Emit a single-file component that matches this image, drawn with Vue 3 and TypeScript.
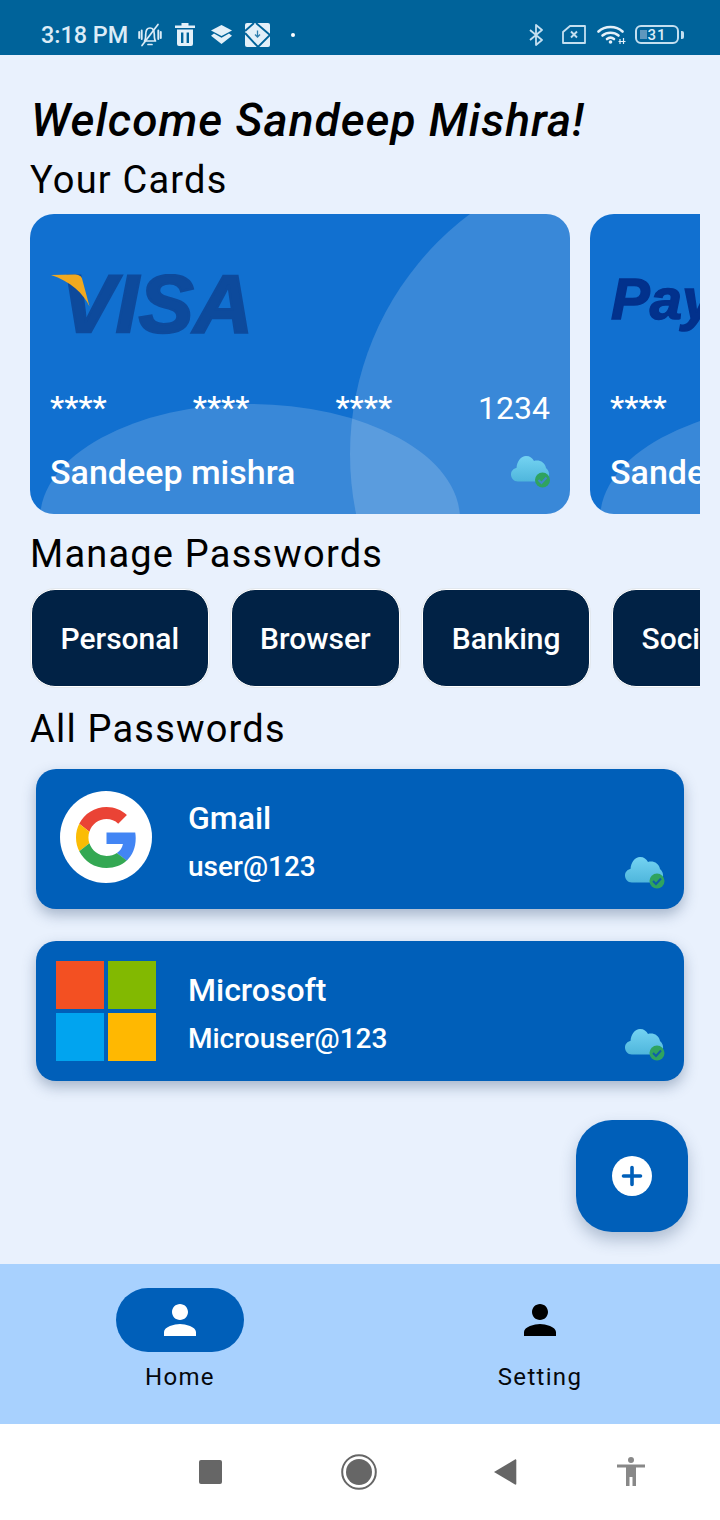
<script setup lang="ts">
interface Card { logo: 'visa' | 'paypal' }
const cards: Card[] = [{ logo: 'visa' }, { logo: 'paypal' }]
const chips: string[] = ['Personal', 'Browser', 'Banking', 'Social']
const personPath = 'M12 12c2.21 0 4-1.79 4-4s-1.79-4-4-4-4 1.790-4 4 1.790 4 4 4zm0 2c-2.670 0-8 1.340-8 4v2h16v-2c0-2.660-5.330-4-8-4z'
</script>

<template>
  <div class="page">
    <header class="status">
      <span class="time">3:18 PM</span>
      <svg class="ic-bell" width="24" height="24" viewBox="0 0 24 24" fill="none" stroke="#dcecf7" stroke-width="1.700" stroke-linecap="round" stroke-linejoin="round">
        <path d="M6.500 18c1.200-1.500 1.200-3.500 1.200-6.500C7.700 7.500 9.500 5 12 5s4.300 2.500 4.300 6.500c0 3 0 5 1.200 6.500z" />
        <path d="M10 21.500h4" />
        <path d="M4 22.500 20 1.500" />
        <path d="M1.200 9v6M3.700 7.500v8.500M20.300 7.500v8.500M22.800 9v6" stroke-width="1.900" />
      </svg>
      <svg class="ic-trash" width="20" height="23" viewBox="0 0 20 23" fill="#e3f0f9">
        <path fill-rule="evenodd" d="M6.500 0h7v2.500H20V5H0V2.500h6.500zM2 6.500h16V21a2 2 0 0 1-2 2H4a2 2 0 0 1-2-2zM6 9.500V20h2.400V9.500zm5.600 0V20H14V9.500z" />
      </svg>
      <svg class="ic-layers" width="21" height="19" viewBox="0 0 21 19" fill="#e3f0f9">
        <path d="M10.500 0 21 5.500 10.500 11 0 5.500z" />
        <path d="M3 8.500 10.500 12.700 18 8.500l3 2.200-10.500 8.300L0 10.700z" />
      </svg>
      <svg class="ic-app" width="25" height="24" viewBox="0 0 25 24">
        <rect width="25" height="24" rx="2" fill="#e3f0f9" />
        <path d="M0 8 9 0M11 0 25 12M0 10 13 24M13 24 25 12" stroke="#00639a" stroke-width="1.900" fill="none" />
        <path d="M12.500 7.500v6M10 11.500l2.500 2.500 2.500-2.500" stroke="#2f7fae" stroke-width="1.300" fill="none" />
      </svg>
      <span class="dot"></span>
      <div class="status-right">
        <svg class="ic-bt" width="15" height="22" viewBox="0 0 15 22" fill="none" stroke="#c4dff0" stroke-width="1.800" stroke-linejoin="round">
          <path d="M1 6 13 16l-6 5V1l6 5L1 16" />
        </svg>
        <svg class="ic-sim" width="24" height="19" viewBox="0 0 24 19" fill="none" stroke="#c4dff0" stroke-width="1.800">
          <path d="M8 1h15v17H1V7z" stroke-linejoin="round" />
          <path d="M9 6.500l6 6M15 6.500l-6 6" stroke-width="1.900" />
        </svg>
        <svg class="ic-wifi" width="29" height="19" viewBox="0 0 29 19" fill="none" stroke="#e3f0f9" stroke-width="2.600" stroke-linecap="round">
          <path d="M1.500 6.500C8 0.500 19 0.500 25.500 6.500" />
          <path d="M5.500 10.500C10 6.800 17 6.800 21.500 10.500" />
          <path d="M10 14c2.500-2 4.500-2 7 0" />
          <circle cx="13.500" cy="17" r="1.800" fill="#e3f0f9" stroke="none" />
          <path d="M23 14v5M26.500 13v6M21.500 16.500h7" stroke-width="1.200" stroke-linecap="butt" />
        </svg>
        <div class="battery">
          <div class="battery-body">
            <span class="battery-level"></span>
            <span class="battery-text">31</span>
          </div>
          <span class="battery-tip"></span>
        </div>
      </div>
    </header>

    <main class="main">
      <h1 class="title">Welcome Sandeep Mishra!</h1>
      <h2 class="heading heading-first">Your Cards</h2>
      <div class="card-row">
        <article v-for="card in cards" :key="card.logo" class="card">
          <span class="blob blob-right"></span>
          <span class="blob blob-bottom"></span>
          <div class="card-inner">
            <svg v-if="card.logo === 'visa'" class="logo" width="210" height="70" viewBox="0 0 210 70">
              <text class="visa-text" x="11" y="58" textLength="192" lengthAdjust="spacingAndGlyphs">VISA</text>
              <path d="M1 1 24 .5c4 0 7 1 8 4l7.500 28C34 20 20 7 1 1z" fill="#f0a91f" />
            </svg>
            <svg v-else class="logo" width="210" height="70" viewBox="0 0 210 70">
              <text class="pay-text" x="1" y="45">Pay</text>
            </svg>
            <div class="number-row">
              <span class="stars">****</span>
              <span class="stars">****</span>
              <span class="stars">****</span>
              <span class="last">1234</span>
            </div>
            <div class="name-row">
              <span class="name">Sandeep mishra</span>
              <svg class="cloud" width="41" height="34" viewBox="0 0 41 34">
                <defs>
                  <linearGradient id="cloudFill" x1="0" y1="0" x2="0" y2="1">
                    <stop offset="0" stop-color="#74d3f2" />
                    <stop offset="1" stop-color="#4fb6dc" />
                  </linearGradient>
                </defs>
                <path d="M7 26.500C2.500 26.500 0 23 0 19.500c0-3.500 2.500-6 5.500-6.500C6 6 10 1 15 1c4 0 6.500 2 8 5 5-1.500 11 1 12 7 2.500 2 3.500 5 3 8l-7 5.500z" fill="url(#cloudFill)" />
                <circle cx="31.500" cy="25" r="7.500" fill="#2fa35f" />
                <path d="M27.500 25l3 3 5-5.500" fill="none" stroke="#3f88c8" stroke-width="2" />
              </svg>
            </div>
          </div>
        </article>
      </div>

      <h2 class="heading heading-manage">Manage Passwords</h2>
      <div class="chip-row">
        <button v-for="chip in chips" :key="chip" class="chip" type="button">{{ chip }}</button>
      </div>

      <h2 class="heading heading-all">All Passwords</h2>
      <div class="pw-list">
        <article class="pw">
          <div class="pw-logo">
            <span class="g-disc">
              <svg width="61" height="61" viewBox="0 0 48 48">
                <path fill="#EA4335" d="M24 9.500c3.540 0 6.710 1.220 9.210 3.600l6.850-6.850C35.900 2.380 30.470 0 24 0 14.620 0 6.510 5.380 2.560 13.220l7.980 6.190C12.430 13.720 17.740 9.500 24 9.500z" />
                <path fill="#4285F4" d="M46.980 24.550c0-1.570-.15-3.090-.38-4.550H24v9.020h12.940c-.58 2.960-2.260 5.480-4.780 7.180l7.730 6c4.510-4.180 7.090-10.360 7.090-17.650z" />
                <path fill="#FBBC05" d="M10.530 28.590c-.48-1.450-.76-2.990-.76-4.590s.27-3.140.76-4.590l-7.980-6.190C.92 16.460 0 20.120 0 24c0 3.880.92 7.540 2.560 10.780l7.970-6.190z" />
                <path fill="#34A853" d="M24 48c6.480 0 11.930-2.130 15.890-5.810l-7.730-6c-2.150 1.450-4.920 2.300-8.160 2.300-6.260 0-11.570-4.220-13.470-9.910l-7.980 6.190C6.510 42.620 14.620 48 24 48z" />
              </svg>
            </span>
          </div>
          <div class="pw-text">
            <span class="pw-name">Gmail</span>
            <span class="pw-user">user@123</span>
          </div>
          <svg class="pw-cloud" width="41" height="34" viewBox="0 0 41 34">
            <path d="M7 26.500C2.500 26.500 0 23 0 19.500c0-3.500 2.500-6 5.500-6.500C6 6 10 1 15 1c4 0 6.500 2 8 5 5-1.500 11 1 12 7 2.500 2 3.500 5 3 8l-7 5.500z" fill="url(#cloudFill)" />
            <circle cx="32" cy="25" r="7.500" fill="#2fa35f" />
            <path d="M28 25l3 3 5-5.500" fill="none" stroke="#0f5ea8" stroke-width="2" />
          </svg>
        </article>
        <article class="pw">
          <div class="pw-logo">
            <div class="ms">
              <span class="ms-r"></span>
              <span class="ms-g"></span>
              <span class="ms-b"></span>
              <span class="ms-y"></span>
            </div>
          </div>
          <div class="pw-text">
            <span class="pw-name">Microsoft</span>
            <span class="pw-user">Microuser@123</span>
          </div>
          <svg class="pw-cloud" width="41" height="34" viewBox="0 0 41 34">
            <path d="M7 26.500C2.500 26.500 0 23 0 19.500c0-3.500 2.500-6 5.500-6.500C6 6 10 1 15 1c4 0 6.500 2 8 5 5-1.500 11 1 12 7 2.500 2 3.500 5 3 8l-7 5.500z" fill="url(#cloudFill)" />
            <circle cx="32" cy="25" r="7.500" fill="#2fa35f" />
            <path d="M28 25l3 3 5-5.500" fill="none" stroke="#0f5ea8" stroke-width="2" />
          </svg>
        </article>
      </div>

      <button class="fab" type="button" aria-label="Add">
        <svg width="40" height="40" viewBox="0 0 40 40">
          <circle cx="20" cy="20" r="20" fill="#fff" />
          <path d="M20 11.500v17M11.500 20h17" stroke="#005fb9" stroke-width="3.600" stroke-linecap="round" />
        </svg>
      </button>
    </main>

    <nav class="tabs">
      <div class="tab">
        <span class="tab-pill tab-pill-active">
          <svg width="48" height="48" viewBox="0 0 24 24" fill="#fff"><path :d="personPath" /></svg>
        </span>
        <span class="tab-label">Home</span>
      </div>
      <div class="tab">
        <span class="tab-pill">
          <svg width="48" height="48" viewBox="0 0 24 24" fill="#000"><path :d="personPath" /></svg>
        </span>
        <span class="tab-label">Setting</span>
      </div>
    </nav>

    <footer class="sysnav">
      <span class="sys-square"></span>
      <svg class="sys-home" width="36" height="36" viewBox="0 0 36 36">
        <circle cx="18" cy="18" r="16.800" fill="none" stroke="#666" stroke-width="2" />
        <circle cx="18" cy="18" r="13" fill="#666" />
      </svg>
      <svg class="sys-back" width="24" height="28" viewBox="0 0 24 28">
        <path d="M1 14 22 1.500c.7-.4 1.300 0 1.300.8v23.400c0 .8-.6 1.200-1.300.8z" fill="#666" />
      </svg>
      <svg class="sys-access" width="28" height="30" viewBox="0 0 28 30" fill="#888">
        <circle cx="14" cy="3" r="3" />
        <path d="M0 7.500h28v3h-9V29h-3.500v-9h-3v9H9V10.500H0z" />
      </svg>
    </footer>
  </div>
</template>

<style scoped>
.page {
  width: 720px;
  height: 1520px;
  display: flex;
  flex-direction: column;
  background: #e9f1fd;
  font-family: Roboto, "Liberation Sans", sans-serif;
  overflow: hidden;
}
.status {
  height: 55px;
  flex: none;
  background: #00639a;
  display: flex;
  align-items: center;
  padding: 14px 36px 0 41px;
  box-sizing: border-box;
}
.time {
  width: 86px;
  font-size: 23.400px;
  font-weight: 500;
  color: #dcecf7;
  white-space: nowrap;
}
.ic-bell { margin-left: 11px; }
.ic-trash { margin-left: 13px; }
.ic-layers { margin-left: 16px; }
.ic-app { margin-left: 13px; }
.dot {
  width: 4px;
  height: 4px;
  margin-left: 21px;
  background: #fff;
  border-radius: 50%;
}
.status-right {
  margin-left: auto;
  display: flex;
  align-items: center;
}
.ic-sim { margin-left: 18px; }
.ic-wifi { margin-left: 11px; }
.battery {
  margin-left: 9px;
  display: flex;
  align-items: center;
}
.battery-body {
  position: relative;
  width: 44px;
  height: 19px;
  box-sizing: border-box;
  border: 2px solid #c4dff0;
  border-radius: 6px;
  display: flex;
  align-items: center;
  justify-content: center;
}
.battery-level {
  position: absolute;
  left: 3px;
  top: 3px;
  bottom: 3px;
  width: 7px;
  background: #5f97bd;
}
.battery-text {
  position: relative;
  font-size: 15px;
  font-weight: 500;
  letter-spacing: 1px;
  color: #dcecf7;
}
.battery-tip {
  width: 3px;
  height: 8px;
  margin-left: 2px;
  background: #c4dff0;
  border-radius: 0 2px 2px 0;
}

.main {
  position: relative;
  flex: 1;
  min-height: 0;
  padding: 0 20px 0 30px;
  display: flex;
  flex-direction: column;
}
.title {
  margin: 36px 0 0 1px;
  font-size: 46px;
  line-height: 58px;
  font-weight: 500;
  font-style: italic;
  letter-spacing: 1px;
  color: #000;
  white-space: nowrap;
}
.heading {
  margin: 0 0 13px 0;
  font-size: 38px;
  line-height: 44px;
  font-weight: 400;
  letter-spacing: 1.200px;
  color: #000;
  white-space: nowrap;
}
.heading-first { margin-top: 9px; margin-bottom: 12px; }
.heading-manage { margin-top: 18px; margin-bottom: 12px; }
.heading-all { margin-top: 19px; margin-bottom: 18px; }

.card-row {
  display: flex;
  gap: 20px;
  overflow: hidden;
}
.card {
  position: relative;
  flex: none;
  width: 540px;
  height: 300px;
  border-radius: 24px;
  overflow: hidden;
  background: #1170d0;
}
.blob {
  position: absolute;
  border-radius: 50%;
  background: rgba(255, 255, 255, 0.17);
}
.blob-right {
  left: 320px;
  top: -60px;
  width: 600px;
  height: 600px;
}
.blob-bottom {
  left: 10px;
  top: 190px;
  width: 420px;
  height: 230px;
}
.card-inner {
  position: relative;
  height: 100%;
  box-sizing: border-box;
  padding: 0 20px;
  display: flex;
  flex-direction: column;
}
.logo {
  display: block;
  margin-top: 60px;
  flex: none;
}
.visa-text {
  font-family: "Liberation Sans", Arial, sans-serif;
  font-weight: 700;
  font-style: italic;
  font-size: 82px;
  fill: #0d4a9c;
  stroke: #0d4a9c;
  stroke-width: 2.500px;
}
.pay-text {
  font-family: "Liberation Sans", Arial, sans-serif;
  font-weight: 700;
  font-style: italic;
  font-size: 58px;
  fill: #02318c;
  stroke: #02318c;
  stroke-width: 1.500px;
}
.number-row {
  margin-top: 42px;
  height: 44px;
  display: flex;
  justify-content: space-between;
  align-items: center;
  color: #fff;
}
.stars {
  font-size: 32px;
  font-weight: 500;
  line-height: 44px;
  margin-top: -2px;
}
.last {
  font-size: 32px;
  line-height: 44px;
  font-weight: 450;
}
.name-row {
  display: flex;
  justify-content: space-between;
  align-items: flex-start;
  color: #fff;
}
.name {
  margin-top: 20px;
  font-size: 34px;
  line-height: 44px;
  font-weight: 500;
  white-space: nowrap;
}
.cloud {
  margin: 25px -2px 0 0;
  flex: none;
}

.chip-row {
  display: flex;
  gap: 22px;
  overflow: hidden;
  padding: 1px 0 1px 1px;
}
.chip {
  flex: none;
  height: 98px;
  padding: 1px 28.500px 0;
  box-sizing: border-box;
  border-radius: 24px;
  border: 1px solid #fff;
  box-shadow: 0 0 0 1px #e2e8ef;
  background: #012245;
  color: #fff;
  font-family: inherit;
  font-size: 30px;
  font-weight: 500;
}

.pw-list {
  margin: 0 16px 0 6px;
  display: flex;
  flex-direction: column;
  gap: 32px;
}
.pw {
  position: relative;
  height: 140px;
  border-radius: 20px;
  background: #005fb9;
  box-shadow: 0 6px 14px rgba(40, 70, 110, 0.35);
  display: flex;
  align-items: center;
}
.pw-logo {
  width: 140px;
  flex: none;
  display: flex;
  justify-content: flex-start;
  padding-left: 20px;
  box-sizing: border-box;
}
.g-disc {
  margin: -4px 0 0 4px;
  width: 92px;
  height: 92px;
  border-radius: 50%;
  background: #fff;
  display: flex;
  align-items: center;
  justify-content: center;
}
.ms {
  width: 100px;
  height: 100px;
  display: grid;
  grid-template-columns: 48px 48px;
  grid-template-rows: 48px 48px;
  gap: 4px;
}
.ms-r { background: #f35022; }
.ms-g { background: #82b901; }
.ms-b { background: #01a4ef; }
.ms-y { background: #ffb801; }
.pw-text {
  margin: 8px 0 0 12px;
  display: flex;
  flex-direction: column;
  color: #fff;
  font-weight: 500;
}
.pw-name {
  margin-top: -1px;
  font-size: 32px;
  line-height: 48px;
}
.pw-user {
  margin-top: 1px;
  font-size: 28px;
  line-height: 48px;
}
.pw-cloud {
  position: absolute;
  right: 18px;
  bottom: 19px;
}
.fab {
  position: absolute;
  left: 576px;
  top: 1065px;
  width: 112px;
  height: 112px;
  padding: 0;
  border: none;
  border-radius: 36px;
  background: #005fb9;
  box-shadow: 0 8px 16px rgba(40, 70, 110, 0.3);
  display: flex;
  align-items: center;
  justify-content: center;
}

.tabs {
  height: 160px;
  flex: none;
  background: #a8d1fe;
  display: grid;
  grid-template-columns: 1fr 1fr;
}
.tab {
  display: flex;
  flex-direction: column;
  align-items: center;
  padding-top: 24px;
}
.tab-pill {
  width: 128px;
  height: 64px;
  border-radius: 32px;
  display: flex;
  align-items: center;
  justify-content: center;
}
.tab-pill-active { background: #005fb9; }
.tab-label {
  margin-top: 8px;
  font-size: 24px;
  line-height: 34px;
  font-weight: 450;
  letter-spacing: 1.300px;
  color: #05080c;
}

.sysnav {
  height: 96px;
  flex: none;
  background: #fff;
  display: flex;
  align-items: center;
  padding-left: 199px;
}
.sys-square {
  width: 23px;
  height: 24px;
  border-radius: 2px;
  background: #666;
}
.sys-home { margin-left: 119px; }
.sys-back { margin-left: 116px; }
.sys-access { margin-left: 100px; }
</style>

<style>
html, body { margin: 0; padding: 0; }
</style>
